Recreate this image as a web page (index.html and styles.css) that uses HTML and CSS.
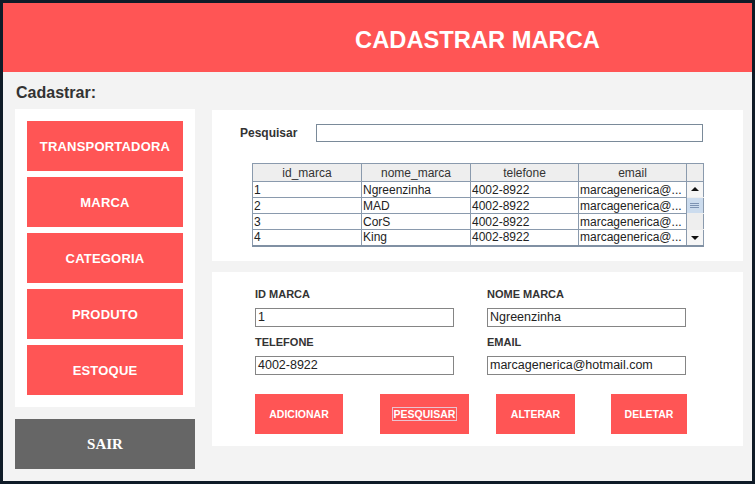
FILE: index.html
```html
<!DOCTYPE html>
<html lang="pt">
<head>
<meta charset="utf-8">
<title>Cadastrar Marca</title>
<link rel="stylesheet" href="styles.css">
</head>
<body>
<div class="window">
  <header class="header">
    <h1 class="title">CADASTRAR MARCA</h1>
  </header>
  <main class="main">
    <div class="section-label">Cadastrar:</div>
    <div class="row">
      <aside class="left-col">
        <nav class="nav-panel">
          <button class="nav-btn">TRANSPORTADORA</button>
          <button class="nav-btn">MARCA</button>
          <button class="nav-btn">CATEGORIA</button>
          <button class="nav-btn">PRODUTO</button>
          <button class="nav-btn">ESTOQUE</button>
        </nav>
        <button class="exit-btn">SAIR</button>
      </aside>
      <section class="right-col">
        <div class="panel search-panel">
          <div class="search-row">
            <label class="search-label">Pesquisar</label>
            <div class="search-input"></div>
          </div>
          <div class="table-wrap">
            <table class="grid">
              <thead>
                <tr>
                  <th>id_marca</th><th>nome_marca</th><th>telefone</th><th>email</th><th class="sb-head"></th>
                </tr>
              </thead>
              <tbody>
                <tr><td>1</td><td>Ngreenzinha</td><td>4002-8922</td><td>marcagenerica@...</td><td class="sb sb-up"><span class="tri-up"></span></td></tr>
                <tr><td>2</td><td>MAD</td><td>4002-8922</td><td>marcagenerica@...</td><td class="sb sb-thumb"><span class="grip"></span></td></tr>
                <tr><td>3</td><td>CorS</td><td>4002-8922</td><td>marcagenerica@...</td><td class="sb sb-track"></td></tr>
                <tr><td>4</td><td>King</td><td>4002-8922</td><td>marcagenerica@...</td><td class="sb sb-down"><span class="tri-down"></span></td></tr>
              </tbody>
            </table>
          </div>
        </div>
        <div class="panel form-panel">
          <div class="form-grid">
            <div class="field">
              <div class="field-label">ID MARCA</div>
              <div class="field-input">1</div>
            </div>
            <div class="field">
              <div class="field-label">NOME MARCA</div>
              <div class="field-input">Ngreenzinha</div>
            </div>
            <div class="field">
              <div class="field-label">TELEFONE</div>
              <div class="field-input">4002-8922</div>
            </div>
            <div class="field">
              <div class="field-label">EMAIL</div>
              <div class="field-input">marcagenerica@hotmail.com</div>
            </div>
          </div>
          <div class="actions">
            <button class="act-btn act-add">ADICIONAR</button>
            <button class="act-btn act-search"><span class="focus">PESQUISAR</span></button>
            <button class="act-btn act-edit">ALTERAR</button>
            <button class="act-btn act-del">DELETAR</button>
          </div>
        </div>
      </section>
    </div>
  </main>
</div>
</body>
</html>
```

FILE: styles.css
```css
html, body {
  margin: 0;
  background: #0f1b27;
}
body {
  padding: 3px;
  font-family: "Liberation Sans", Arial, sans-serif;
}
* { box-sizing: border-box; }

.window {
  width: 749px;
  height: 478px;
  background: #f3f3f3;
  display: flex;
  flex-direction: column;
}

.header {
  height: 69px;
  background: #ff5555;
  padding: 25px 9px 0 209px;
}
.title {
  margin: 0;
  text-align: center;
  color: #ffffff;
  font: bold 23.7px/24px "Liberation Sans", Arial, sans-serif;
}

.main {
  padding: 12px 9px 0 12px;
}
.section-label {
  margin-left: 1px;
  font: bold 16px/18px "Liberation Sans", Arial, sans-serif;
  color: #333333;
}

.row {
  display: flex;
  align-items: flex-start;
  gap: 17px;
  margin-top: 7px;
}

.left-col {
  width: 180px;
  display: flex;
  flex-direction: column;
  gap: 12px;
}
.nav-panel {
  background: #ffffff;
  padding: 12px;
  display: flex;
  flex-direction: column;
  gap: 6px;
}
button {
  border: 0;
  margin: 0;
  padding: 0;
  cursor: pointer;
}
.nav-btn {
  height: 50px;
  width: 156px;
  background: #ff5555;
  color: #ffffff;
  font: bold 13px "Liberation Sans", Arial, sans-serif;
  letter-spacing: 0.2px;
}
.exit-btn {
  height: 50px;
  width: 180px;
  background: #666666;
  color: #ffffff;
  font: bold 15px "Liberation Serif", "Times New Roman", serif;
}

.right-col {
  width: 531px;
  margin-top: 1px;
  display: flex;
  flex-direction: column;
  gap: 11px;
}
.panel {
  background: #ffffff;
}
.search-panel {
  height: 151px;
  padding: 14px 0 0 28px;
}
.search-row {
  display: flex;
  align-items: center;
}
.search-label {
  width: 76px;
  font: bold 12px "Liberation Sans", Arial, sans-serif;
  color: #333333;
}
.search-input {
  width: 387px;
  height: 18px;
  border: 1px solid #7a8a99;
  background: #ffffff;
}

.table-wrap {
  margin: 21px 0 0 12px;
}
.grid {
  border-collapse: collapse;
  table-layout: fixed;
  width: 451px;
  font: 12px "Liberation Sans", Arial, sans-serif;
  color: #222222;
  border: 1px solid #8090a3;
  border-bottom-width: 2px;
}
.grid th, .grid td {
  border: 1px solid #8a9aad;
  padding: 0 1px;
  white-space: nowrap;
  overflow: hidden;
}
.grid th {
  height: 18px;
  background: #eeeeee;
  font-weight: normal;
  text-align: center;
  color: #333333;
}
.grid th:nth-child(1), .grid td:nth-child(1) { width: 109px; }
.grid th:nth-child(2), .grid td:nth-child(2) { width: 109px; }
.grid th:nth-child(3), .grid td:nth-child(3) { width: 108px; }
.grid th:nth-child(4), .grid td:nth-child(4) { width: 108px; }
.grid th:nth-child(5), .grid td:nth-child(5) { width: 17px; }
.grid td {
  height: 16px;
  line-height: 14px;
  text-align: left;
}
.grid .sb-head { background: #eeeeee; }
.grid td.sb {
  padding: 0;
  position: relative;
  border-top-color: #eeeeee;
  border-bottom-color: #eeeeee;
}
.sb-up, .sb-down { background: #f6f6f6; }
.sb-track { background: #eeeeee; }
.sb-thumb {
  background: #ccdcee;
}
.tri-up, .tri-down {
  position: absolute;
  left: 4px;
  top: 5px;
  width: 0;
  height: 0;
  border-left: 4px solid transparent;
  border-right: 4px solid transparent;
}
.tri-up { border-bottom: 4px solid #111111; }
.tri-down { border-top: 4px solid #111111; top: 6px; }
.grip {
  position: absolute;
  left: 3px;
  top: 5px;
  width: 9px;
  height: 5px;
  border-top: 1px solid #7d93b3;
  border-bottom: 1px solid #7d93b3;
}
.grip::after {
  content: "";
  position: absolute;
  left: 0;
  right: 0;
  top: 1px;
  border-top: 1px solid #7d93b3;
}

.form-panel {
  height: 174px;
  padding: 15px 0 0 43px;
}
.form-grid {
  display: grid;
  grid-template-columns: 199px 199px;
  column-gap: 33px;
  row-gap: 8px;
}
.field-label {
  font: bold 11px/14px "Liberation Sans", Arial, sans-serif;
  color: #333333;
  margin-bottom: 7px;
}
.field-input {
  height: 19px;
  border: 1px solid #858585;
  padding: 0 2px;
  font: 12.5px/17px "Liberation Sans", Arial, sans-serif;
  color: #222222;
  background: #ffffff;
}

.actions {
  display: flex;
  margin-top: 19px;
}
.act-btn {
  height: 40px;
  background: #ff5555;
  color: #ffffff;
  font: bold 10.5px "Liberation Sans", Arial, sans-serif;
}
.act-add { width: 88px; }
.act-search { width: 89px; margin-left: 37px; }
.act-edit { width: 79px; margin-left: 27px; }
.act-del { width: 76px; margin-left: 36px; }
.focus {
  display: inline-block;
  border: 1px solid rgba(230, 215, 230, 0.85);
  padding: 1px 1px 0;
  line-height: 11px;
}
```
